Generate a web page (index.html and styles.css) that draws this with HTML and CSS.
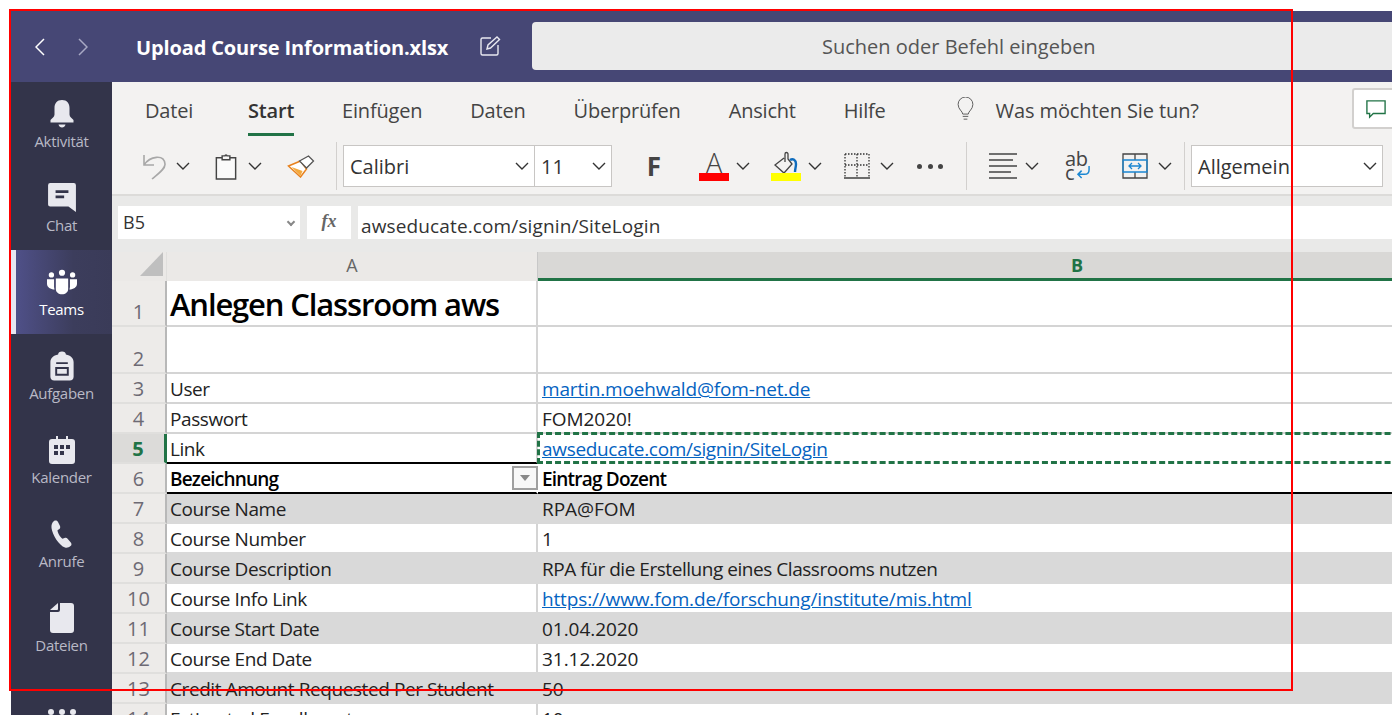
FILE: index.html
```html
<!DOCTYPE html>
<html lang="de">
<head>
  <meta charset="UTF-8" />
  <title>Upload Course Information.xlsx</title>
  <link rel="stylesheet" href="styles.css">
</head>
<body>
  <div class="app">
    <header class="titlebar">
      <div class="nav-arrows">
        <svg class="nav-icon" viewBox="0 0 10 18"><path d="M9 1 1 9l8 8"/></svg>
        <svg class="nav-icon nav-icon-dim" viewBox="0 0 10 18"><path d="M1 1l8 8-8 8"/></svg>
      </div>
      <div class="file-name">Upload Course Information.xlsx</div>
      <svg class="edit-icon" viewBox="0 0 22 22"><path d="M12 3H3.500A1.500 1.500 0 0 0 2 4.500v14A1.500 1.500 0 0 0 3.500 20h14a1.500 1.500 0 0 0 1.500-1.500V10"/><path d="M8 14l1-4 9-8 2.500 2.500-9 8.500z"/></svg>
      <div class="search">Suchen oder Befehl eingeben</div>
    </header>

    <div class="main">
      <nav class="rail">
        <div class="rail-item">
          <svg viewBox="0 0 26 30"><path class="fill" d="M13 1c-5 0-7.500 3.500-7.500 8v6.500C5.500 18 3 19 1.500 21v2.500h23V21c-1.500-2-4-3-4-5.500V9c0-4.500-2.500-8-7.500-8z"/><path class="fill" d="M9.500 25.500h7c-.5 2-1.800 3-3.500 3s-3-1-3.500-3z"/></svg>
          <span>Aktivität</span>
        </div>
        <div class="rail-item">
          <svg viewBox="1 1 28 28"><path class="fill" d="M4 1h22a2 2 0 0 1 2 2v25l-7-5H4a2 2 0 0 1-2-2V3a2 2 0 0 1 2-2z"/><path class="cut" d="M9 9h12M9 14h8"/></svg>
          <span>Chat</span>
        </div>
        <div class="rail-item rail-active">
          <svg viewBox="0 -3 34 34"><circle class="bright" cx="17" cy="3.500" r="3.500"/><circle class="bright" cx="5" cy="6" r="3"/><circle class="bright" cx="29" cy="6" r="3"/><path class="bright" d="M0 11h8v8.500c0 1 .2 2 .6 3C4 22.500 0 20 0 16zM34 11h-8v8.500c0 1-.2 2-.6 3 4.600 0 8.600-2.500 8.600-6.500zM10 10h14v12c0 3.500-3 6-7 6s-7-2.500-7-6z"/></svg>
          <span>Teams</span>
        </div>
        <div class="rail-item">
          <svg viewBox="0.500 0.500 25 31"><path class="fill" d="M9 4C9 2 10.500 1 13 1s4 1 4 3c5 1 8 4 8 8v15c0 2.500-1.500 4-4 4H5c-2.500 0-4-1.500-4-4V12c0-4 3-7 8-8z"/><path class="cut-thin" d="M7 13h12M7 18h12v7H7z"/></svg>
          <span>Aufgaben</span>
        </div>
        <div class="rail-item">
          <svg viewBox="0 -1 26 30"><path class="fill" d="M7 0h2v3h8V0h2v3h4a3 3 0 0 1 3 3v19a3 3 0 0 1-3 3H3a3 3 0 0 1-3-3V6a3 3 0 0 1 3-3h4z"/><path class="cut-solid" d="M5 9h4v4H5zM11 9h4v4h-4zM17 9h4v4h-4zM5 15h4v4H5zM11 15h4v4h-4z"/></svg>
          <span>Kalender</span>
        </div>
        <div class="rail-item">
          <svg viewBox="0 -1 22 30"><path class="fill" d="M3 1c1.500-.8 3-.5 4 1l2 4c.5 1.300.2 2.500-1 3.300l-1.500 1c0 2 2.500 7 5 8.500l2-.8c1.300-.5 2.500-.2 3.300.9l3.200 3.800c.8 1.200.6 2.500-.5 3.400-1.500 1.200-3.500 2-5.500 1.400C8 25.500 1.500 15 .500 8 .200 5 1 2.500 3 1z"/></svg>
          <span>Anrufe</span>
        </div>
        <div class="rail-item">
          <svg viewBox="0 0 24 30"><path class="fill" d="M10 0h11a3 3 0 0 1 3 3v24a3 3 0 0 1-3 3H3a3 3 0 0 1-3-3V9h8a2 2 0 0 0 2-2z"/><path class="fill" d="M8 0v6a1 1 0 0 1-1 1H0z"/></svg>
          <span>Dateien</span>
        </div>
        <div class="rail-more"><i></i><i></i><i></i></div>
      </nav>

      <section class="excel">
        <div class="ribbon">
          <div class="tabs">
            <span class="tab">Datei</span>
            <span class="tab tab-active">Start</span>
            <span class="tab">Einfügen</span>
            <span class="tab">Daten</span>
            <span class="tab">Überprüfen</span>
            <span class="tab">Ansicht</span>
            <span class="tab">Hilfe</span>
            <svg class="bulb" viewBox="0 0 18 26"><path d="M6 18.500c0-3-5-5-5-10.500a8 8 0 0 1 16 0c0 5.500-5 7.500-5 10.500z"/><path d="M6 21h6M7 24h4"/></svg>
            <span class="tab tab-ask">Was möchten Sie tun?</span>
            <div class="comment-btn"><svg viewBox="0 0 22 22"><path d="M1 2h20v14H8l-4 4v-4H1z"/></svg></div>
          </div>
          <div class="tools">
            <svg class="tool tool-undo" viewBox="0 0 24 27"><path d="M2 2v10h10M2 12C8 3 22 1 23 11c.5 5-7 10-13 15"/></svg>
            <svg class="chev chev-a" viewBox="0 0 14 8"><path d="M1 1l6 6 6-6"/></svg>
            <svg class="tool tool-paste" viewBox="0 0 22 28"><path d="M7 5H1v22h20V5h-6M7 7V3h3a1 1 0 0 1 2 0h3v4z"/></svg>
            <svg class="chev chev-b" viewBox="0 0 14 8"><path d="M1 1l6 6 6-6"/></svg>
            <svg class="tool tool-brush" viewBox="0 0 27 23"><path class="brush-fill" d="M1 11 13 6l6 8-6 8z"/><path class="brush-low" d="M4 12l11 4-2 5z"/><path class="brush-line" d="M12 6l9-5 5 5-7 7z"/></svg>
            <div class="sep sep-a"></div>
            <div class="select font-select">Calibri<svg class="chev" viewBox="0 0 14 8"><path d="M1 1l6 6 6-6"/></svg></div>
            <div class="select size-select">11<svg class="chev" viewBox="0 0 14 8"><path d="M1 1l6 6 6-6"/></svg></div>
            <span class="bold-btn">F</span>
            <div class="color-btn"><span>A</span><i class="swatch swatch-red"></i></div>
            <svg class="chev chev-c" viewBox="0 0 14 8"><path d="M1 1l6 6 6-6"/></svg>
            <div class="color-btn color-fill">
              <svg viewBox="0 0 30 23"><path class="bucket" d="M13 7 4 14l9 8 8-9-4-5V3a1.500 1.500 0 0 0-3 0v8"/><path class="drop" d="M19 9c3-2 6 0 6 4 0 3-1 5-1 8"/></svg>
              <i class="swatch swatch-yellow"></i>
            </div>
            <svg class="chev chev-c" viewBox="0 0 14 8"><path d="M1 1l6 6 6-6"/></svg>
            <svg class="tool tool-border" viewBox="0 0 26 26"><path class="dots" d="M1 1h24M1 12h24M1 1v23M13 1v23M25 1v23"/><path d="M0 25h26"/></svg>
            <svg class="chev chev-d" viewBox="0 0 14 8"><path d="M1 1l6 6 6-6"/></svg>
            <div class="more"><i></i><i></i><i></i></div>
            <div class="sep sep-b"></div>
            <svg class="tool tool-align" viewBox="0 0 28 26"><path d="M0 1h28M0 7h24M0 13h28M0 19h22M0 25h28"/></svg>
            <svg class="chev chev-e" viewBox="0 0 14 8"><path d="M1 1l6 6 6-6"/></svg>
            <div class="wrap-btn"><span class="wrap-ab">ab</span><span class="wrap-c">c</span><svg viewBox="0 0 16 14"><path d="M14 0v4c0 3-2 5-5 5H2M6 5 2 9l4 4"/></svg></div>
            <svg class="tool tool-merge" viewBox="0 0 26 26"><path d="M1 1h24v24H1zM13 1v6M13 19v6"/><path class="merge-blue" d="M1 7h24v12H1zM7 13h12M10 10l-3 3 3 3M16 10l3 3-3 3"/></svg>
            <svg class="chev chev-f" viewBox="0 0 14 8"><path d="M1 1l6 6 6-6"/></svg>
            <div class="sep sep-c"></div>
            <div class="select number-select">Allgemein<svg class="chev" viewBox="0 0 14 8"><path d="M1 1l6 6 6-6"/></svg></div>
          </div>
        </div>

        <div class="formula-bar">
          <div class="name-box">B5<span class="name-caret"></span></div>
          <div class="fx-btn">fx</div>
          <div class="formula-input">awseducate.com/signin/SiteLogin</div>
        </div>

        <div class="sheet">
          <div class="row row-head">
            <div class="corner"><span></span></div>
            <div class="col-head">A</div>
            <div class="col-head col-head-on">B</div>
          </div>
          <div class="row row-title">
            <div class="num">1</div>
            <div class="cell cell-title">Anlegen Classroom aws</div>
            <div class="cell"></div>
          </div>
          <div class="row row-tall">
            <div class="num">2</div>
            <div class="cell"></div>
            <div class="cell"></div>
          </div>
          <div class="row">
            <div class="num">3</div>
            <div class="cell">User</div>
            <div class="cell"><a class="link">martin.moehwald@fom-net.de</a></div>
          </div>
          <div class="row">
            <div class="num">4</div>
            <div class="cell">Passwort</div>
            <div class="cell cell-value">FOM2020!</div>
          </div>
          <div class="row row-selected">
            <div class="num num-on">5</div>
            <div class="cell">Link</div>
            <div class="cell cell-copy"><a class="link">awseducate.com/signin/SiteLogin</a></div>
          </div>
          <div class="row row-header-line">
            <div class="num">6</div>
            <div class="cell cell-bold">Bezeichnung<span class="filter"></span></div>
            <div class="cell cell-bold">Eintrag Dozent</div>
          </div>
          <div class="row row-band">
            <div class="num">7</div>
            <div class="cell">Course Name</div>
            <div class="cell cell-value">RPA@FOM</div>
          </div>
          <div class="row">
            <div class="num">8</div>
            <div class="cell">Course Number</div>
            <div class="cell">1</div>
          </div>
          <div class="row row-band">
            <div class="num">9</div>
            <div class="cell">Course Description</div>
            <div class="cell cell-long">RPA für die Erstellung eines Classrooms nutzen</div>
          </div>
          <div class="row">
            <div class="num">10</div>
            <div class="cell">Course Info Link</div>
            <div class="cell"><a class="link">https://www.fom.de/forschung/institute/mis.html</a></div>
          </div>
          <div class="row row-band">
            <div class="num">11</div>
            <div class="cell">Course Start Date</div>
            <div class="cell cell-value">01.04.2020</div>
          </div>
          <div class="row">
            <div class="num">12</div>
            <div class="cell">Course End Date</div>
            <div class="cell cell-value">31.12.2020</div>
          </div>
          <div class="row row-band">
            <div class="num">13</div>
            <div class="cell">Credit Amount Requested Per Student</div>
            <div class="cell cell-value">50</div>
          </div>
          <div class="row">
            <div class="num">14</div>
            <div class="cell">Estimated Enrollment</div>
            <div class="cell cell-value">10</div>
          </div>
        </div>
      </section>
    </div>
  </div>
  <div class="red-frame"></div>
</body>
</html>
```

FILE: styles.css
```css
* {
  margin: 0;
  padding: 0;
  box-sizing: border-box;
}

html, body {
  height: 715px;
  overflow: hidden;
}

body {
  background: #fff;
  padding: 11px 0 0 11px;
  font-family: "Open Sans", "Noto Sans", sans-serif;
  position: relative;
}

.app {
  height: 704px;
  display: flex;
  flex-direction: column;
  overflow: hidden;
}

/* title bar */
.titlebar {
  height: 71px;
  flex: none;
  background: #464775;
  display: flex;
  align-items: flex-start;
}

.nav-arrows {
  width: 125px;
  padding: 27px 0 0 24px;
  display: flex;
  gap: 33px;
}

.nav-icon {
  width: 10px;
  height: 18px;
  fill: none;
  stroke: #fff;
  stroke-width: 1.5;
}

.nav-icon-dim {
  stroke: #a8a9c4;
}

.file-name {
  width: 343px;
  padding-top: 23px;
  color: #fff;
  font-size: 20px;
  font-weight: 700;
  letter-spacing: -0.14px;
  white-space: nowrap;
}

.edit-icon {
  width: 22px;
  height: 22px;
  margin-top: 24px;
  fill: none;
  stroke: #e8e8f0;
  stroke-width: 1.4;
}

.search {
  margin: 11px 0 0 31px;
  flex: 1;
  height: 48px;
  background: #ebebeb;
  border-radius: 4px 0 0 4px;
  color: #555;
  font-size: 20px;
  line-height: 49px;
  padding-left: 290px;
  white-space: nowrap;
}

/* left rail */
.main {
  flex: 1;
  min-height: 0;
  display: flex;
}

.rail {
  width: 101px;
  flex: none;
  background: #33344a;
  display: flex;
  flex-direction: column;
}

.rail-item {
  height: 84px;
  flex: none;
  display: flex;
  flex-direction: column;
  align-items: center;
  padding-top: 17px;
  color: #b9b9c6;
  font-size: 15px;
  line-height: 20px;
  letter-spacing: -0.3px;
}

.rail-item svg {
  height: 30px;
  width: 36px;
  margin-bottom: 2px;
}

.rail-active {
  background: linear-gradient(90deg, #4f5088 0%, #3c3d5c 60%, #3a3b58 100%);
  border-left: 5px solid #e6e6f0;
  color: #fff;
  padding-right: 5px;
}

.fill {
  fill: #e8e8ee;
}

.bright {
  fill: #fff;
}

.cut {
  fill: none;
  stroke: #33344a;
  stroke-width: 2.5;
}

.cut-thin {
  fill: none;
  stroke: #33344a;
  stroke-width: 2;
}

.cut-solid {
  fill: #33344a;
}

.rail-more {
  display: flex;
  justify-content: center;
  gap: 5px;
  padding-top: 39px;
}

.rail-more i {
  width: 6px;
  height: 6px;
  border-radius: 50%;
  background: #e8e8ee;
}

/* ribbon */
.excel {
  flex: 1;
  min-width: 0;
  display: flex;
  flex-direction: column;
}

.ribbon {
  height: 114px;
  flex: none;
  background: #f3f2f1;
  border-bottom: 2px solid #dcdbd9;
}

.tabs {
  height: 56px;
  display: flex;
  align-items: flex-start;
  padding-left: 33px;
  gap: 48px;
  position: relative;
}

.tab {
  height: 54px;
  padding-top: 15px;
  font-size: 20px;
  color: #444;
  letter-spacing: -0.2px;
  white-space: nowrap;
}

.tab-active {
  font-weight: 600;
  color: #333;
  margin-left: 7px;
  border-bottom: 3px solid #217346;
}

.tab-ask {
  letter-spacing: -0.1px;
}

.bulb {
  width: 19px;
  height: 24px;
  margin: 15px -27px 0 22px;
  fill: none;
  stroke: #555;
  stroke-width: 1;
}

.comment-btn {
  position: absolute;
  left: 1240px;
  top: 6px;
  width: 60px;
  height: 41px;
  background: #fff;
  border: 2px solid #d2d0ce;
  border-radius: 3px;
  padding: 9px 0 0 12px;
}

.comment-btn svg {
  width: 20px;
  height: 20px;
  fill: none;
  stroke: #217346;
  stroke-width: 1.5;
}

.tools {
  height: 56px;
  display: flex;
  align-items: center;
  padding-left: 30px;
}

.chev {
  width: 14px;
  height: 8px;
  flex: none;
  fill: none;
  stroke: #333;
  stroke-width: 1.4;
}

.chev-a {
  margin-left: 10px;
}

.chev-b {
  margin-left: 11px;
}

.chev-c {
  margin-left: 7px;
}

.chev-d {
  margin-left: 10px;
}

.chev-e {
  margin-left: 8px;
}

.chev-f {
  margin-left: 10px;
}

.tool {
  flex: none;
  fill: none;
  stroke: #444;
  stroke-width: 1.3;
}

.tool-undo {
  width: 24px;
  height: 27px;
  stroke: #a8a8a8;
  stroke-width: 1.6;
}

.tool-paste {
  width: 22px;
  height: 27px;
  margin-left: 25px;
  fill: #fafafa;
  stroke-width: 1.5;
}

.tool-brush {
  width: 28px;
  height: 23px;
  margin-left: 25px;
}

.brush-fill {
  fill: #fff;
  stroke: #e8821e;
  stroke-width: 1.5;
}

.brush-low {
  fill: #f4a93c;
  stroke: none;
}

.brush-line {
  fill: #fff;
  stroke: #555;
}

.sep {
  width: 1px;
  height: 48px;
  flex: none;
  background: #d2d0ce;
}

.sep-a {
  margin: 0 6px 0 21px;
}

.sep-b {
  margin: 0 22px 0 23px;
}

.sep-c {
  margin: 0 6px 0 12px;
}

.select {
  height: 42px;
  flex: none;
  background: #fff;
  border: 1px solid #c8c6c4;
  display: flex;
  align-items: center;
  justify-content: space-between;
  font-size: 20px;
  color: #333;
  padding: 0 5px 0 6px;
  white-space: nowrap;
}

.font-select {
  width: 192px;
}

.size-select {
  width: 78px;
  margin-left: -1px;
}

.number-select {
  width: 192px;
}

.bold-btn {
  width: 20px;
  flex: none;
  margin: 0 35px 0 32px;
  font-size: 26px;
  font-weight: 700;
  color: #444;
  text-align: center;
}

.color-btn {
  width: 30px;
  height: 30px;
  flex: none;
  position: relative;
  text-align: center;
  font-size: 27px;
  font-weight: 300;
  line-height: 24px;
  color: #444;
}

.color-fill {
  margin-left: 21px;
}

.color-fill svg {
  display: block;
  width: 30px;
  height: 23px;
}

.bucket {
  fill: none;
  stroke: #444;
  stroke-width: 1.3;
}

.drop {
  fill: none;
  stroke: #0f6cbd;
  stroke-width: 2.4;
}

.swatch {
  position: absolute;
  left: 0;
  bottom: 0;
  width: 30px;
  height: 8px;
}

.swatch-red {
  background: #f00;
}

.swatch-yellow {
  background: #ff0;
}

.tool-border {
  width: 26px;
  height: 26px;
  margin-left: 22px;
  fill: #fafafa;
  stroke: #222;
}

.dots {
  stroke-dasharray: 1.5 1.5;
  stroke: #333;
}

.more {
  width: 26px;
  flex: none;
  display: flex;
  justify-content: space-between;
  margin-left: 23px;
}

.more i {
  width: 5px;
  height: 5px;
  border-radius: 50%;
  background: #444;
}

.tool-align {
  width: 28px;
  height: 26px;
}

.wrap-btn {
  width: 25px;
  height: 28px;
  margin-left: 26px;
  flex: none;
  position: relative;
  color: #444;
  font-size: 20px;
  line-height: 14px;
  letter-spacing: -0.3px;
}

.wrap-ab {
  display: block;
}

.wrap-c {
  display: block;
}

.wrap-btn svg {
  position: absolute;
  left: 11px;
  top: 14px;
  width: 15px;
  height: 13px;
  fill: none;
  stroke: #1b87d2;
  stroke-width: 1.6;
}

.tool-merge {
  width: 26px;
  height: 26px;
  margin-left: 32px;
}

.merge-blue {
  stroke: #1b87d2;
  stroke-width: 1.3;
}

/* formula bar */
.formula-bar {
  height: 56px;
  flex: none;
  background: #e9e9e8;
  display: flex;
  align-items: flex-start;
  gap: 7px;
  padding: 10px 0 0 6px;
}

.name-box {
  width: 182px;
  height: 33px;
  background: #fff;
  font-size: 18px;
  line-height: 32px;
  padding-left: 5px;
  color: #333;
  position: relative;
}

.name-caret {
  position: absolute;
  right: 6px;
  top: 13px;
  width: 6px;
  height: 6px;
  border-left: 2px solid #888;
  border-bottom: 2px solid #888;
  transform: rotate(-45deg);
}

.fx-btn {
  width: 44px;
  height: 33px;
  background: #fff;
  text-align: center;
  font-family: "Liberation Serif", serif;
  font-style: italic;
  font-weight: 700;
  font-size: 18px;
  line-height: 30px;
  color: #666;
}

.formula-input {
  flex: 1;
  height: 33px;
  background: #fff;
  font-size: 19px;
  letter-spacing: 0.13px;
  line-height: 40px;
  padding-left: 3px;
  color: #333;
  white-space: nowrap;
}

/* sheet */
.sheet {
  flex: 1;
  min-height: 0;
  background: #fff;
  overflow: hidden;
}

.row {
  display: grid;
  grid-template-columns: 55px 371px 1078px;
  grid-template-rows: minmax(0, 1fr);
  height: 30px;
}

.row-head {
  height: 29px;
  background: #ebe9e7;
}

.row-title {
  height: 46px;
}

.row-tall {
  height: 47px;
}

.corner {
  position: relative;
  border-right: 1px solid #e0dfdd;
}

.corner span {
  position: absolute;
  right: 3px;
  bottom: 5px;
  width: 0;
  height: 0;
  border-style: solid;
  border-width: 0 0 24px 23px;
  border-color: transparent transparent #bfbfbf transparent;
}

.col-head {
  text-align: center;
  font-size: 18px;
  color: #666;
  line-height: 26px;
  border-right: 1px solid #c8c8c8;
}

.col-head-on {
  background: #d9d8d6;
  color: #217346;
  font-weight: 700;
  border-right: none;
  border-bottom: 3px solid #217346;
}

.num {
  background: #edebe9;
  border-bottom: 2px solid #e0dfdd;
  border-right: 2px solid #b8b8b8;
  font-size: 20px;
  color: #6d6a74;
  display: flex;
  align-items: flex-end;
  justify-content: center;
  line-height: 26px;
}

.num-on {
  background: #dcdbd9;
  color: #217346;
  font-weight: 700;
  border-right: 3px solid #217346;
}

.cell {
  min-width: 0;
  min-height: 0;
  border-right: 2px solid #d4d4d4;
  border-bottom: 2px solid #d4d4d4;
  padding: 1px 0 0 3px;
  font-size: 19px;
  line-height: 28px;
  letter-spacing: -0.42px;
  color: #222;
  white-space: nowrap;
  position: relative;
}

.cell + .cell {
  padding-left: 4px;
}

.cell-value {
  letter-spacing: -0.05px;
}

.cell-long {
  letter-spacing: -0.46px;
}

.cell-title {
  padding-top: 3px;
  font-size: 31px;
  font-weight: 600;
  color: #000;
  line-height: 40px;
  letter-spacing: -1.15px;
}

.link {
  color: #0563c1;
  text-decoration: underline;
  letter-spacing: -0.15px;
}

.row-selected .cell {
  border-bottom: 2px solid #000;
}

.row-selected .cell-copy {
  margin: -2px 0 0 -1px;
  padding: 1px 0 0 2px;
  border: 3px dashed #217346;
  border-right: none;
  line-height: 26px;
}

.cell-copy .link {
  letter-spacing: -0.32px;
}

.cell-bold {
  font-weight: 600;
  letter-spacing: -0.8px;
  color: #000;
}

.row-header-line .cell {
  border-bottom: 2px solid #000;
  border-right-color: transparent;
}

.filter {
  position: absolute;
  right: -2px;
  top: 2px;
  width: 26px;
  height: 24px;
  background: #f8f8f8;
  border: 2px solid #a0a0a0;
}

.filter::after {
  content: "";
  position: absolute;
  left: 6px;
  top: 7px;
  border-style: solid;
  border-width: 6px 5px 0;
  border-color: #888 transparent transparent;
}

.row-band .cell {
  background: #d9d9d9;
  border-color: #d9d9d9;
}

.row-band ~ .row-band .cell {
  box-shadow: 0 -2px 0 #d9d9d9;
}

.row:not(.row-band):not(.row-selected):not(.row-header-line):nth-child(n+9) .cell {
  border-bottom-color: #fff;
}

/* red box drawn over the screenshot */
.red-frame {
  position: absolute;
  left: 9px;
  top: 9px;
  width: 1284px;
  height: 682px;
  border: 2px solid #f00;
  pointer-events: none;
}
```
